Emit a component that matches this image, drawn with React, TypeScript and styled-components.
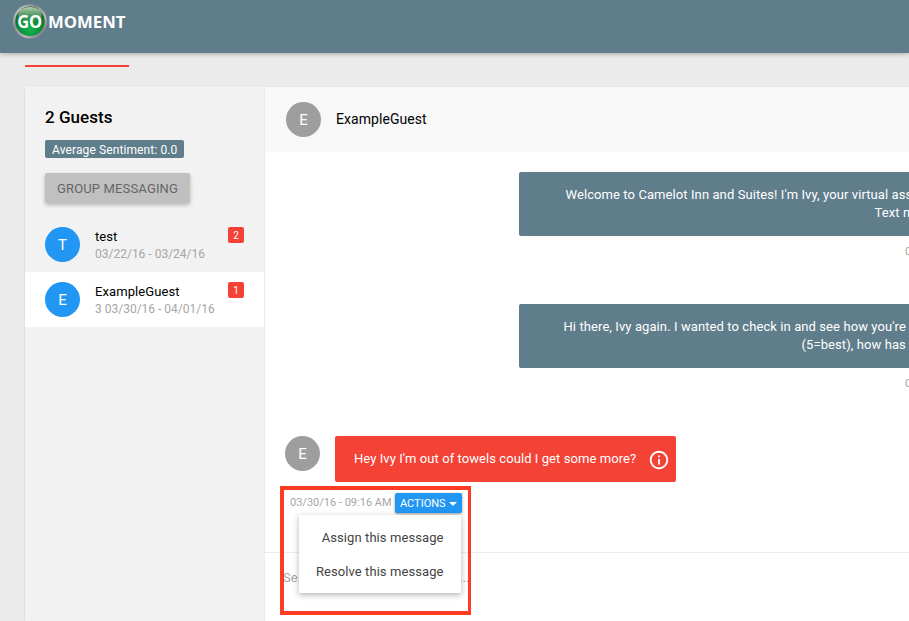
import React from "react";
import styled, { createGlobalStyle } from "styled-components";

const slate = "#607d8b";
const red = "#f44336";
const blue = "#2196f3";

const GlobalStyle = createGlobalStyle`
  *, *::before, *::after { box-sizing: border-box; }
  html, body { margin: 0; padding: 0; }
  body { background: #ebebeb; font-family: Roboto, "Liberation Sans", sans-serif; overflow: hidden; }
`;

const Page = styled.div`
  position: relative;
  display: flex;
  flex-direction: column;
  width: 100vw;
  height: 100vh;
  overflow: hidden;
  color: #000;
`;

const TopBar = styled.header`
  flex: none;
  height: 53px;
  padding: 3px 0 0 11px;
  background: ${slate};
  box-shadow: 0 1px 5px rgba(0, 0, 0, 0.28);
`;

const LogoArt = styled.svg`
  display: block;
`;

const TabStrip = styled.nav`
  flex: none;
  height: 34px;
  padding: 12px 0 0 25px;
`;

const ActiveTab = styled.div`
  width: 104px;
  height: 2px;
  background: ${red};
`;

const Workspace = styled.main`
  flex: 1;
  min-height: 0;
  display: flex;
  margin-left: 25px;
  box-shadow: 0 1px 2px rgba(0, 0, 0, 0.14);
`;

const Sidebar = styled.aside`
  flex: none;
  width: 240px;
  background: #f2f2f2;
  border-right: 1px solid #ececec;
`;

const SidebarHead = styled.div`
  display: flex;
  flex-direction: column;
  align-items: flex-start;
  height: 130px;
  padding: 19px 20px 0;
`;

const Heading = styled.h1`
  margin: 0;
  font-size: 17px;
  line-height: 22px;
  font-weight: 500;
  letter-spacing: 0.03px;
`;

const Sentiment = styled.span`
  width: 139px;
  height: 18px;
  margin-top: 12px;
  padding-left: 7px;
  border-radius: 2px;
  background: ${slate};
  color: #fff;
  font-size: 12px;
  line-height: 20px;
  letter-spacing: 0.11px;
  white-space: nowrap;
`;

const GroupButton = styled.button`
  width: 145px;
  height: 30px;
  margin-top: 15px;
  padding: 0;
  border: 0;
  border-radius: 2px;
  background: #c0c0c0;
  box-shadow: 0 2px 4px rgba(0, 0, 0, 0.26);
  color: #666;
  font: 400 13px/31px Roboto, sans-serif;
  letter-spacing: 0.15px;
`;

const GuestRow = styled.div<{ $active?: boolean }>`
  display: flex;
  height: 55px;
  padding: 10px 20px;
  background: ${(p) => (p.$active ? "#fff" : "transparent")};
`;

const Avatar = styled.div<{ $tone?: string }>`
  flex: none;
  width: 35px;
  height: 35px;
  border-radius: 50%;
  background: ${(p) => p.$tone || "#9e9e9e"};
  color: #fff;
  font-size: 15px;
  line-height: 36px;
  text-align: center;
`;

const GuestInfo = styled.div`
  flex: 1;
  padding: 1px 0 0 15px;
  white-space: nowrap;
`;

const GuestName = styled.div`
  font-size: 13px;
  line-height: 18px;
  letter-spacing: 0.08px;
`;

const GuestDates = styled.div`
  color: #a6a6a6;
  font-size: 12px;
  line-height: 16px;
`;

const Count = styled.span`
  flex: none;
  width: 16px;
  height: 16px;
  border-radius: 2px;
  background: ${red};
  color: #fff;
  font-size: 10px;
  line-height: 17px;
  text-align: center;
`;

const Chat = styled.section`
  flex: 1;
  min-width: 0;
  display: flex;
  flex-direction: column;
  background: #fff;
`;

const ChatHead = styled.header`
  flex: none;
  display: flex;
  align-items: center;
  gap: 15px;
  height: 65px;
  padding-left: 21px;
  background: #f8f8f8;
`;

const ChatTitle = styled.h2`
  margin: 0;
  padding-bottom: 2px;
  font-size: 14px;
  font-weight: 400;
  letter-spacing: 0.06px;
`;

const Thread = styled.div`
  flex: none;
  height: 400px;
  padding-top: 20px;
`;

const Outgoing = styled.article`
  height: 132px;
  margin-left: 254px;
  overflow: hidden;
`;

const OutgoingBubble = styled.div`
  height: 64px;
  padding-top: 14px;
  border-radius: 2px 0 0 2px;
  background: ${slate};
  color: #fff;
  font-size: 13px;
  line-height: 18px;
`;

const Line = styled.div<{ $indent: number; $spacing: number }>`
  padding-left: ${(p) => p.$indent}px;
  letter-spacing: ${(p) => p.$spacing}px;
  white-space: nowrap;
`;

const OutgoingTime = styled.div`
  padding: 8px 0 0 386px;
  color: #a6a6a6;
  font-size: 11px;
  line-height: 15px;
  white-space: nowrap;
`;

const Incoming = styled.article`
  display: flex;
  gap: 15px;
  padding-left: 20px;
`;

const AlertBubble = styled.div`
  display: flex;
  justify-content: space-between;
  align-items: center;
  width: 341px;
  height: 46px;
  padding: 0 6px 0 19px;
  border-radius: 2px;
  background: ${red};
  color: #fff;
  font-size: 13px;
  white-space: nowrap;
`;

const AlertText = styled.span`
  padding-bottom: 2px;
  letter-spacing: 0.07px;
`;

const InfoArt = styled.svg`
  display: block;
  margin-top: 2px;
`;

const MessageMeta = styled.div`
  display: flex;
  gap: 3px;
  padding: 11px 0 0 25px;
`;

const Stamp = styled.time`
  width: 102px;
  color: #a6a6a6;
  font-size: 11px;
  line-height: 19px;
  white-space: nowrap;
`;

const MenuAnchor = styled.div`
  position: relative;
`;

const ActionsButton = styled.button`
  display: flex;
  align-items: center;
  gap: 3px;
  width: 67px;
  height: 20px;
  padding: 1px 0 0 5px;
  border: 0;
  border-radius: 2px;
  background: ${blue};
  box-shadow: 0 1px 3px rgba(0, 0, 0, 0.4);
  color: #fff;
  font: 400 11px/19px Roboto, sans-serif;
`;

const Caret = styled.span`
  border: 4px solid transparent;
  border-top-color: #fff;
  border-bottom: 0;
`;

const Menu = styled.div`
  position: absolute;
  z-index: 2;
  top: 22px;
  right: 1px;
  width: 162px;
  height: 78px;
  padding: 6px 17.5px 0 0;
  background: #fff;
  box-shadow: 0 2px 6px rgba(0, 0, 0, 0.3);
  text-align: right;
`;

const MenuItem = styled.div`
  color: #444;
  font-size: 13px;
  line-height: 34px;
  letter-spacing: 0.08px;
  white-space: nowrap;
`;

const Composer = styled.footer`
  flex: 1;
  display: flex;
  padding: 16px 0 0 18px;
  border-top: 1px solid #ececec;
  color: #a6a6a6;
  font-size: 13px;
  line-height: 18px;
`;

const ComposerStart = styled.span`
  width: 176px;
`;

const Highlight = styled.div`
  position: absolute;
  z-index: 3;
  left: 280px;
  top: 486px;
  width: 191px;
  height: 129px;
  border: 4px solid #ff3b24;
  border-right-width: 3.5px;
  pointer-events: none;
`;

function Logo() {
  return (
    <LogoArt width="120" height="38" viewBox="0 0 120 38" role="img" aria-label="GoMoment">
      <defs>
        <linearGradient id="rim" x1="0" y1="0" x2="1" y2="1">
          <stop offset="0" stopColor="#e2e2e2" />
          <stop offset="0.35" stopColor="#8d8d8d" />
          <stop offset="0.65" stopColor="#b9b6bc" />
          <stop offset="1" stopColor="#5e5b60" />
        </linearGradient>
        <radialGradient id="glass" cx="0.5" cy="0.8" r="0.75">
          <stop offset="0" stopColor="#12b24b" />
          <stop offset="0.5" stopColor="#098a3a" />
          <stop offset="1" stopColor="#17602b" />
        </radialGradient>
        <linearGradient id="shine" x1="0" y1="0" x2="0" y2="1">
          <stop offset="0" stopColor="#d3e4cf" stopOpacity="0.85" />
          <stop offset="1" stopColor="#5fa36c" stopOpacity="0.2" />
        </linearGradient>
      </defs>
      <circle cx="19" cy="18.5" r="17" fill="url(#rim)" />
      <circle cx="19" cy="18.3" r="14.7" fill="url(#glass)" />
      <ellipse cx="19" cy="11.5" rx="12" ry="7.5" fill="url(#shine)" />
      <text x="6.2" y="25" fill="#fff" fontFamily="Open Sans" fontWeight="700" fontSize="17" textLength="25" lengthAdjust="spacingAndGlyphs">GO</text>
      <text x="37" y="25" fill="#fff" fontFamily="Open Sans" fontWeight="700" fontSize="16.8" textLength="77.5" lengthAdjust="spacingAndGlyphs">MOMENT</text>
    </LogoArt>
  );
}

function InfoIcon() {
  return (
    <InfoArt width="22" height="22" viewBox="0 0 24 24" fill="#fff">
      <path d="M11 17h2v-6h-2v6zm1-15C6.48 2 2 6.48 2 12s4.48 10 10 10 10-4.48 10-10S17.52 2 12 2zm0 18c-4.41 0-8-3.59-8-8s3.59-8 8-8 8 3.59 8 8-3.59 8-8 8zM11 9h2V7h-2v2z" />
    </InfoArt>
  );
}

const guests = [
  { initial: "T", name: "test", dates: "03/22/16 - 03/24/16", count: 2, active: false },
  { initial: "E", name: "ExampleGuest", dates: "3 03/30/16 - 04/01/16", count: 1, active: true },
];

const outgoing = [
  [
    { text: "Welcome to Camelot Inn and Suites! I'm Ivy, your virtual ass", indent: 46.5, spacing: 0.09 },
    { text: "Text m", indent: 355.5, spacing: 0.1 },
  ],
  [
    { text: "Hi there, Ivy again. I wanted to check in and see how you're", indent: 44.5, spacing: 0.09 },
    { text: "(5=best), how has", indent: 282.5, spacing: 0.09 },
  ],
];

export default function App() {
  return (
    <>
      <GlobalStyle />
      <Page>
        <TopBar>
          <Logo />
        </TopBar>
        <TabStrip>
          <ActiveTab />
        </TabStrip>
        <Workspace>
          <Sidebar>
            <SidebarHead>
              <Heading>2 Guests</Heading>
              <Sentiment>Average Sentiment: 0.0</Sentiment>
              <GroupButton>GROUP MESSAGING</GroupButton>
            </SidebarHead>
            {guests.map((g) => (
              <GuestRow key={g.name} $active={g.active}>
                <Avatar $tone={blue}>{g.initial}</Avatar>
                <GuestInfo>
                  <GuestName>{g.name}</GuestName>
                  <GuestDates>{g.dates}</GuestDates>
                </GuestInfo>
                <Count>{g.count}</Count>
              </GuestRow>
            ))}
          </Sidebar>
          <Chat>
            <ChatHead>
              <Avatar>E</Avatar>
              <ChatTitle>ExampleGuest</ChatTitle>
            </ChatHead>
            <Thread>
              {outgoing.map((lines) => (
                <Outgoing key={lines[0].text}>
                  <OutgoingBubble>
                    {lines.map((l) => (
                      <Line key={l.text} $indent={l.indent} $spacing={l.spacing}>{l.text}</Line>
                    ))}
                  </OutgoingBubble>
                  <OutgoingTime>0</OutgoingTime>
                </Outgoing>
              ))}
              <Incoming>
                <Avatar>E</Avatar>
                <AlertBubble>
                  <AlertText>Hey Ivy I'm out of towels could I get some more?</AlertText>
                  <InfoIcon />
                </AlertBubble>
              </Incoming>
              <MessageMeta>
                <Stamp>03/30/16 - 09:16 AM</Stamp>
                <MenuAnchor>
                  <ActionsButton>
                    ACTIONS
                    <Caret />
                  </ActionsButton>
                  <Menu>
                    <MenuItem>Assign this message</MenuItem>
                    <MenuItem>Resolve this message</MenuItem>
                  </Menu>
                </MenuAnchor>
              </MessageMeta>
            </Thread>
            <Composer>
              <ComposerStart>Se</ComposerStart>
              <span>...</span>
            </Composer>
          </Chat>
        </Workspace>
        <Highlight />
      </Page>
    </>
  );
}
